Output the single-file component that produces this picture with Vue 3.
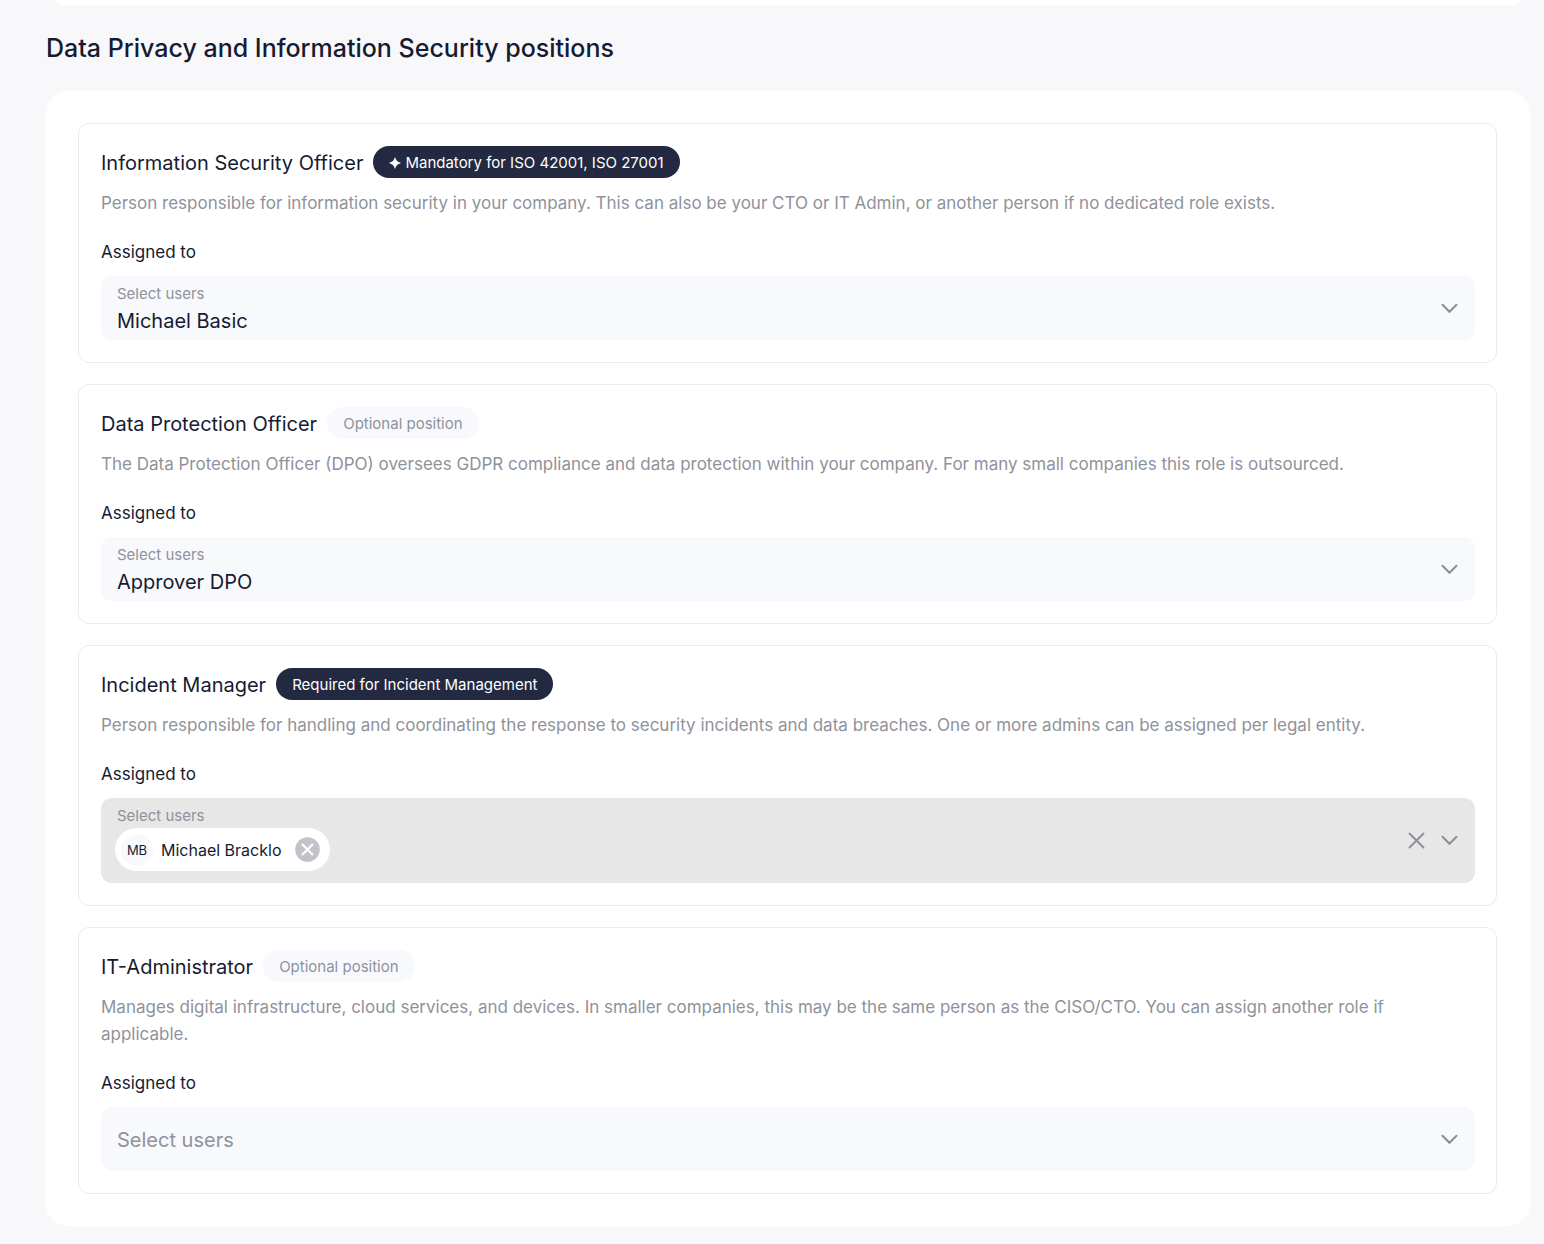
<script setup>
import { reactive } from 'vue'

const positions = reactive([
  {
    id: 'iso',
    title: 'Information Security Officer',
    badge: 'Mandatory for ISO 42001, ISO 27001',
    required: true,
    sparkle: true,
    description:
      'Person responsible for information security in your company. This can also be your CTO or IT Admin, or another person if no dedicated role exists.',
    value: 'Michael Basic'
  },
  {
    id: 'dpo',
    title: 'Data Protection Officer',
    badge: 'Optional position',
    description:
      'The Data Protection Officer (DPO) oversees GDPR compliance and data protection within your company. For many small companies this role is outsourced.',
    value: 'Approver DPO'
  },
  {
    id: 'incident',
    title: 'Incident Manager',
    badge: 'Required for Incident Management',
    required: true,
    description:
      'Person responsible for handling and coordinating the response to security incidents and data breaches. One or more admins can be assigned per legal entity.',
    users: [{ initials: 'MB', name: 'Michael Bracklo' }]
  },
  {
    id: 'it',
    title: 'IT-Administrator',
    badge: 'Optional position',
    description:
      'Manages digital infrastructure, cloud services, and devices. In smaller companies, this may be the same person as the CISO/CTO. You can assign another role if applicable.',
    value: ''
  }
])
</script>

<template>
  <main class="page">
    <div class="previous-panel"></div>
    <h1 class="heading">Data Privacy and Information Security positions</h1>
    <div class="panel">
      <section v-for="p in positions" :key="p.id" class="card">
        <div class="card-head">
          <h2 class="title">{{ p.title }}</h2>
          <span class="badge" :class="{ dark: p.required }">
            <svg v-if="p.sparkle" width="12" height="12" viewBox="0 0 12 12" aria-hidden="true">
              <path d="M6 0 C7 3.4 8.6 5 12 6 C8.6 7 7 8.6 6 12 C5 8.6 3.4 7 0 6 C3.4 5 5 3.4 6 0 Z" fill="currentColor" />
            </svg>
            {{ p.badge }}
          </span>
        </div>
        <p class="description">{{ p.description }}</p>
        <label class="assigned" :for="p.id">Assigned to</label>

        <div v-if="p.users" class="field multi">
          <span class="hint">Select users</span>
          <div class="chips">
            <span v-for="u in p.users" :key="u.name" class="chip">
              <span class="avatar">{{ u.initials }}</span>
              <span class="name">{{ u.name }}</span>
              <button class="icon-button" type="button" :aria-label="'Remove ' + u.name" @click="p.users.splice(p.users.indexOf(u), 1)">
                <svg width="25" height="25" viewBox="0 0 25 25">
                  <circle cx="12.5" cy="12.5" r="12.3" fill="#c2c3c9" />
                  <path d="M7 7 L18 18 M18 7 L7 18" stroke="#fff" stroke-width="2.2" />
                </svg>
              </button>
            </span>
            <input :id="p.id" class="search" type="text" autocomplete="off" />
          </div>
          <div class="actions">
            <button class="icon-button" type="button" aria-label="Clear" @click="p.users.splice(0)">
              <svg width="17" height="17" viewBox="0 0 17 17" fill="none" stroke="#8b8e98" stroke-width="1.8" stroke-linecap="round">
                <path d="M1.5 1.5 L15.5 15.5 M15.5 1.5 L1.5 15.5" />
              </svg>
            </button>
            <button class="icon-button" type="button" aria-label="Open list">
              <svg width="17" height="11" viewBox="0 0 17 11" fill="none" stroke="#8b8e98" stroke-width="2" stroke-linecap="round">
                <path d="M1.5 1.8 L8.5 8.8 L15.5 1.8" />
              </svg>
            </button>
          </div>
        </div>

        <div v-else class="field" :class="{ empty: !p.value }">
          <span v-if="p.value" class="hint">Select users</span>
          <select :id="p.id" v-model="p.value" class="select">
            <option value="">Select users</option>
            <option>Michael Basic</option>
            <option>Approver DPO</option>
            <option>Michael Bracklo</option>
          </select>
          <div class="actions passive">
            <svg width="17" height="11" viewBox="0 0 17 11" fill="none" stroke="#8b8e98" stroke-width="2" stroke-linecap="round" aria-hidden="true">
              <path d="M1.5 1.8 L8.5 8.8 L15.5 1.8" />
            </svg>
          </div>
        </div>
      </section>
    </div>
  </main>
</template>

<style>
body {
  background: #f8f8fa;
}
</style>

<style scoped>
.page {
  overflow: hidden;
  padding: 0 14px 18px 46px;
  color: #151b32;
  font-family: Inter, "Liberation Sans", sans-serif;
}
.previous-panel {
  height: 40px;
  margin-top: -35px;
  border-radius: 22px;
  background: #fff;
}
.heading {
  margin: 24px 0;
  font-size: 25px;
  line-height: 38px;
  font-weight: 500;
}
.panel {
  display: flex;
  flex-direction: column;
  gap: 21px;
  padding: 32px 33px 32px 32px;
  border-radius: 22px;
  background: #fff;
}
.card {
  padding: 22px 21px 22px 22px;
  border: 1px solid #ebebf2;
  border-radius: 11px;
}
.card-head {
  display: flex;
  align-items: center;
  gap: 10px;
}
.title {
  margin: 0;
  padding-top: 2px;
  font-size: 20px;
  line-height: 30px;
  font-weight: 400;
}
.badge {
  display: flex;
  align-items: center;
  gap: 4px;
  padding: 2px 16px 0;
  border-radius: 16px;
  background: #f8f9fd;
  color: #8f929b;
  font-size: 15px;
  line-height: 30px;
}
.badge.dark {
  background: #222941;
  color: #fff;
}
.description {
  margin: 12px 0 22px;
  padding-right: 16px;
  color: #8f929b;
  font-size: 17px;
  line-height: 27px;
}
.assigned {
  display: block;
  margin-bottom: 10px;
  font-size: 17px;
  line-height: 27px;
}
.field {
  position: relative;
  border-radius: 11px;
  background: #f8f9fd;
}
.hint {
  position: absolute;
  top: 8px;
  left: 16px;
  color: #8f929b;
  font-size: 15px;
  line-height: 20px;
  pointer-events: none;
}
.select {
  display: block;
  width: 100%;
  height: 64px;
  padding: 26px 60px 0 16px;
  border: 0;
  border-radius: 11px;
  appearance: none;
  background: transparent;
  color: inherit;
  font: inherit;
  font-size: 20px;
}
.empty .select {
  padding-top: 2px;
  color: #8f929b;
}
.actions {
  position: absolute;
  top: 0;
  right: 17px;
  bottom: 0;
  display: flex;
  align-items: center;
  gap: 16px;
}
.passive {
  pointer-events: none;
}
.multi {
  padding: 30px 80px 12px 14px;
  background: #e7e7e7;
}
.chips {
  display: flex;
}
.chip {
  display: flex;
  align-items: center;
  height: 43px;
  padding: 0 10px 0 6px;
  border-radius: 22px;
  background: #fff;
}
.avatar {
  width: 32px;
  border-radius: 50%;
  background: #f8f9fd;
  font-size: 13px;
  line-height: 32px;
  text-align: center;
}
.name {
  margin: 0 14px 0 8px;
  font-size: 16px;
}
.icon-button {
  display: flex;
  padding: 0;
  border: 0;
  background: none;
  cursor: pointer;
}
.search {
  flex: 1;
  min-width: 0;
  padding: 0 8px;
  border: 0;
  outline: 0;
  background: transparent;
  color: inherit;
  font: inherit;
}
</style>
